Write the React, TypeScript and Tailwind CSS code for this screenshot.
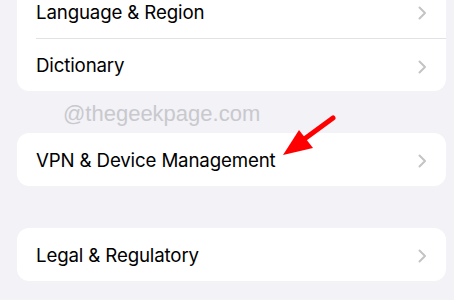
import React from "react";

const font = { fontFamily: "Inter, 'Noto Sans', sans-serif" };

function Chevron() {
  return (
    <svg width="9" height="14" viewBox="0 0 9 14" className="shrink-0">
      <path d="M1.5 1.5 L7 7 L1.5 12.5" fill="none" stroke="#c4c4c7" strokeWidth="2" strokeLinecap="round" strokeLinejoin="round" />
    </svg>
  );
}

function Row({ label, divider }: { label: string; divider?: boolean }) {
  return (
    <div className="pl-[19px]">
      <div className={`h-[53px] flex items-center justify-between pr-[19px] pt-[3px] ${divider ? "border-t border-[#e2e2e6]" : ""}`}>
        <span className="text-[18.7px] text-black tracking-[-0.15px]">{label}</span>
        <Chevron />
      </div>
    </div>
  );
}

export default function App() {
  return (
    <div className="relative w-[454px] h-[300px] overflow-hidden bg-[#f2f2f7]" style={font}>
      <div className="-mt-[15px] ml-[17px] mr-[8px]">
        <div className="bg-white rounded-[12px]">
          <Row label="Language & Region" />
          <Row label="Dictionary" divider />
        </div>
        <div className="h-[42px] flex items-center pl-[46px] pt-[2px]">
          <span className="text-[22px] text-[#c9c9cd]" style={{ fontFamily: "'Liberation Sans', Arial, sans-serif" }}>
            @thegeekpage.com
          </span>
        </div>
        <div className="bg-white rounded-[12px]">
          <Row label="VPN & Device Management" />
        </div>
        <div className="h-[42px]" />
        <div className="bg-white rounded-[12px]">
          <Row label="Legal & Regulatory" />
        </div>
      </div>
      <svg className="absolute left-0 top-0" width="454" height="300" viewBox="0 0 454 300">
        <line x1="333" y1="118" x2="303" y2="140" stroke="#ff0000" strokeWidth="5" strokeLinecap="round" />
        <polygon points="283,155 299,130 313,148" fill="#ff0000" />
      </svg>
    </div>
  );
}
